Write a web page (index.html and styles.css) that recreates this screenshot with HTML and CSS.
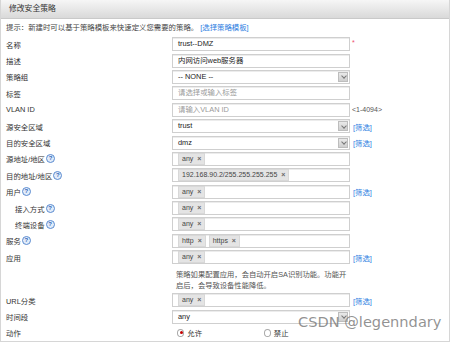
FILE: index.html
```html
<!DOCTYPE html>
<html lang="zh">
<head>
  <meta charset="UTF-8" />
  <title>修改安全策略</title>
  <link rel="stylesheet" href="styles.css">
</head>
<body>
  <div class="panel">
    <div class="panel-head">修改安全策略</div>
    <div class="tip">提示：新建时可以基于策略模板来快速定义您需要的策略。 <a class="link">[选择策略模板]</a></div>

    <div class="form">
      <div class="row">
        <label>名称</label>
        <div class="box">trust--DMZ</div>
        <span class="req">*</span>
      </div>
      <div class="row">
        <label>描述</label>
        <div class="box">内网访问web服务器</div>
        <span></span>
      </div>
      <div class="row">
        <label>策略组</label>
        <div class="box select"><span>-- NONE --</span><i class="arrow"></i></div>
        <span></span>
      </div>
      <div class="row">
        <label>标签</label>
        <div class="box ph">请选择或输入标签</div>
        <span></span>
      </div>
      <div class="row">
        <label>VLAN ID</label>
        <div class="box ph">请输入VLAN ID</div>
        <span class="note">&lt;1-4094&gt;</span>
      </div>
      <div class="row">
        <label>源安全区域</label>
        <div class="box select"><span>trust</span><i class="arrow"></i></div>
        <a class="link">[筛选]</a>
      </div>
      <div class="row">
        <label>目的安全区域</label>
        <div class="box select"><span>dmz</span><i class="arrow"></i></div>
        <a class="link">[筛选]</a>
      </div>
      <div class="row">
        <label>源地址/地区<b class="help">?</b></label>
        <div class="box tags"><span class="tag">any <em>×</em></span></div>
        <span></span>
      </div>
      <div class="row">
        <label>目的地址/地区<b class="help">?</b></label>
        <div class="box tags"><span class="tag">192.168.90.2/255.255.255.255 <em>×</em></span></div>
        <span></span>
      </div>
      <div class="row">
        <label>用户<b class="help">?</b></label>
        <div class="box tags"><span class="tag">any <em>×</em></span></div>
        <a class="link">[筛选]</a>
      </div>
      <div class="row">
        <label class="sub">接入方式<b class="help">?</b></label>
        <div class="box tags"><span class="tag">any <em>×</em></span></div>
        <span></span>
      </div>
      <div class="row">
        <label class="sub">终端设备<b class="help">?</b></label>
        <div class="box tags"><span class="tag">any <em>×</em></span></div>
        <span></span>
      </div>
      <div class="row">
        <label>服务<b class="help">?</b></label>
        <div class="box tags"><span class="tag">http <em>×</em></span><span class="tag">https <em>×</em></span></div>
        <span></span>
      </div>
      <div class="row">
        <label>应用</label>
        <div class="box tags"><span class="tag">any <em>×</em></span></div>
        <a class="link">[筛选]</a>
      </div>
      <div class="row hint-row">
        <span></span>
        <p class="hint">策略如果配置应用，会自动开启SA识别功能。功能开启后，会导致设备性能降低。</p>
        <span></span>
      </div>
      <div class="row">
        <label>URL分类</label>
        <div class="box tags"><span class="tag">any <em>×</em></span></div>
        <a class="link">[筛选]</a>
      </div>
      <div class="row">
        <label>时间段</label>
        <div class="box select"><span>any</span><i class="arrow"></i></div>
        <span></span>
      </div>
      <div class="row">
        <label>动作</label>
        <div class="radios">
          <span class="radio on"></span><span class="opt">允许</span>
          <span class="radio"></span><span class="opt">禁止</span>
        </div>
        <span></span>
      </div>
    </div>
  </div>
  <div class="watermark">CSDN @legenndary</div>
</body>
</html>
```
FILE: styles.css
```css
html, body {
  margin: 0;
  padding: 0;
  background: #fff;
  font-family: "Liberation Sans", "Noto Sans CJK SC", Arial, sans-serif;
  font-size: 7.4px;
  color: #333;
}
.panel {
  width: 448px;
  height: 341px;
  border: 1px solid #d6d6d6;
  border-top: none;
  overflow: hidden;
  position: relative;
}
.panel-head {
  height: 18px;
  line-height: 18px;
  padding-left: 8px;
  font-size: 7.8px;
  color: #333;
  background: linear-gradient(#f6f6f6, #d9d9d9);
  border-bottom: 1px solid #c9c9c9;
}
.tip {
  height: 17px;
  line-height: 17px;
  padding-left: 5px;
  color: #444;
}
.link {
  color: #2d7ddf;
  cursor: pointer;
}
.row {
  display: grid;
  grid-template-columns: 171px 178px 1fr;
  align-items: center;
  height: 16.4px;
}
.row label {
  padding-left: 5px;
  display: flex;
  align-items: center;
}
.row label.sub {
  padding-left: 14px;
}
.help {
  display: inline-block;
  width: 7px;
  height: 7px;
  margin-left: 1px;
  border: 1px solid #5a8bd0;
  border-radius: 50%;
  background: #e2ecf9;
  color: #2f65b8;
  font-size: 6px;
  line-height: 7px;
  text-align: center;
  font-weight: bold;
}
.box {
  height: 14px;
  box-sizing: border-box;
  border: 1px solid #cfcfcf;
  box-shadow: inset 0 1px 0 #ececec;
  padding: 0 5px;
  line-height: 12px;
  background: #fff;
  color: #222;
  white-space: nowrap;
  overflow: hidden;
}
.box.ph {
  color: #9a9a9a;
}
.select {
  display: flex;
  justify-content: space-between;
  align-items: center;
  padding-right: 1px;
}
.arrow {
  width: 10px;
  height: 10px;
  box-sizing: border-box;
  border: 1px solid #bdbdbd;
  background: linear-gradient(#e9e9e9, #cfcfcf);
  position: relative;
}
.arrow::after {
  content: "";
  position: absolute;
  left: 2.5px;
  top: 1.5px;
  width: 3px;
  height: 3px;
  border-right: 1px solid #777;
  border-bottom: 1px solid #777;
  transform: rotate(45deg);
}
.tags {
  display: flex;
  align-items: center;
  gap: 3px;
}
.tag {
  display: inline-block;
  height: 10px;
  line-height: 10px;
  padding: 0 3px;
  background: #e4e4e4;
  border: 1px solid #d8d8d8;
  color: #444;
  font-size: 7px;
}
.tag em {
  font-style: normal;
  font-weight: bold;
  color: #666;
  margin-left: 2px;
}
.req {
  color: #ee4b6a;
  font-size: 7px;
  padding-left: 2px;
  align-self: start;
  padding-top: 3px;
}
.note {
  color: #555;
  padding-left: 2px;
  font-size: 7px;
}
.row .link {
  padding-left: 3px;
}
.hint-row {
  height: 26.5px;
  align-items: start;
}
.hint {
  margin: 4px 0 0;
  padding-left: 4px;
  line-height: 11px;
  color: #555;
  font-size: 7.3px;
}
.radios {
  display: flex;
  align-items: center;
  padding-left: 5px;
}
.radio {
  width: 8px;
  height: 8px;
  box-sizing: border-box;
  border: 1px solid #aaa;
  border-radius: 50%;
  background: #fff;
  position: relative;
}
.radio.on::after {
  content: "";
  position: absolute;
  left: 1.5px;
  top: 1.5px;
  width: 3px;
  height: 3px;
  border-radius: 50%;
  background: #c40000;
}
.opt {
  margin-left: 3px;
  width: 86px;
}
.watermark {
  position: absolute;
  left: 298px;
  top: 313px;
  font-size: 14.6px;
  color: rgba(110, 110, 110, 0.75);
  font-family: "DejaVu Sans", sans-serif;
}
```
